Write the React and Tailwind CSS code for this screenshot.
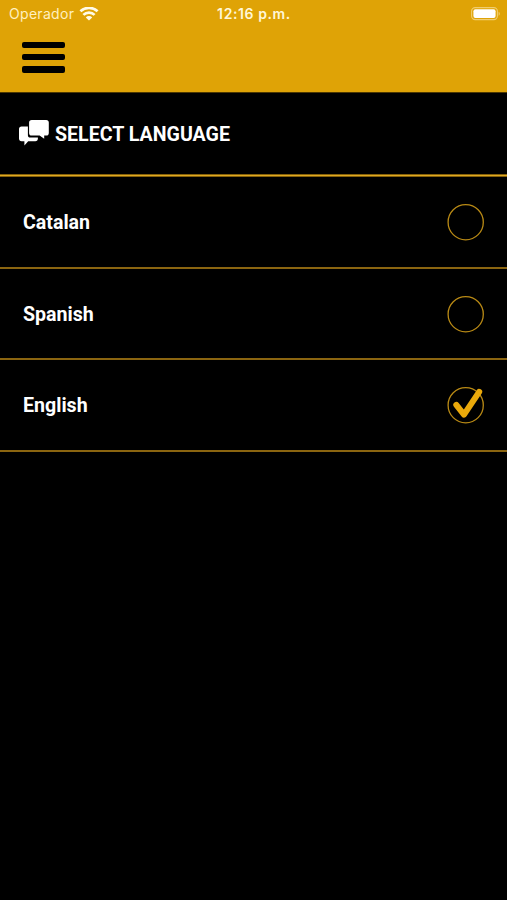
import React from 'react';

const languages = [
  { id: 'ca', name: 'Catalan' },
  { id: 'es', name: 'Spanish' },
  { id: 'en', name: 'English' },
];

function WifiIcon() {
  return (
    <svg className="w-[20px] h-[14px]" viewBox="0 0 20 14" fill="none" stroke="#fffbe8" strokeWidth="2.7">
      <path d="M1.4 4.3a12.6 12.6 0 0 1 17.2 0" />
      <path d="M4.4 7.9a8 8 0 0 1 11.2 0" />
      <path d="M10 13.4 6.8 10.4a4.4 4.4 0 0 1 6.4 0z" fill="#fffbe8" stroke="none" />
    </svg>
  );
}

function BatteryIcon() {
  return (
    <svg className="w-[30px] h-[14px]" viewBox="0 0 30 14">
      <rect x="0.6" y="0.6" width="25.8" height="12" rx="3.6" fill="none" stroke="#f0cd70" strokeWidth="1.1" />
      <rect x="2.4" y="2.2" width="22.2" height="8.8" rx="2" fill="#ffffff" />
      <path d="M27.6 4.8c1.6.6 1.6 3.4 0 4z" fill="#f0cd70" />
    </svg>
  );
}

function ChatIcon() {
  return (
    <svg className="w-[30px] h-[27px]" viewBox="0 0 30 27" fill="#ffffff">
      <path d="M2.6 6.6h6.3v8.6c0 1.5.8 2.3 2.3 2.3h7.7v1.1c0 1.7-.9 2.6-2.6 2.6H9.2l-3.8 4.2v-4.2H2.6C.9 21.2 0 20.3 0 18.6V9.2c0-1.7.9-2.6 2.6-2.6z" />
      <path d="M12.7 0h14.5c1.7 0 2.6.9 2.6 2.6v10.3c0 1.7-.9 2.6-2.6 2.6h-2v3.2l-4.6-3.2h-7.9c-1.7 0-2.6-.9-2.6-2.6V2.6C10.1.9 11 0 12.7 0z" />
    </svg>
  );
}

function Radio({ checked }) {
  return (
    <svg className="w-[38px] h-[38px] overflow-visible" viewBox="0 0 38 38" fill="none">
      <circle cx="18.7" cy="19.2" r="17.6" stroke="#b98a15" strokeWidth="1.3" />
      {checked && (
        <path
          d="M9.3 18.8 17 28.6 32.2 5.8"
          stroke="#eaa90b"
          strokeWidth="6"
          strokeLinecap="round"
          strokeLinejoin="round"
        />
      )}
    </svg>
  );
}

function StatusBar() {
  return (
    <div className="grid grid-cols-3 items-center h-7 pl-[9px] pr-[6px] text-[#fff7d8] font-['Inter','Liberation_Sans',sans-serif]">
      <div className="flex items-center gap-[5px]">
        <span className="text-[14px] leading-5 tracking-[0.3px] text-[#fff0c0]">Operador</span>
        <WifiIcon />
      </div>
      <span className="text-center text-[14px] leading-5 font-semibold tracking-[0.6px] whitespace-nowrap pr-[2px]">12:16 p.m.</span>
      <div className="flex justify-end">
        <BatteryIcon />
      </div>
    </div>
  );
}

export default function App() {
  const selected = 'en';

  return (
    <div className="h-[900px] bg-black text-white overflow-hidden font-['Roboto','Liberation_Sans',sans-serif]">
      <header className="h-[92px] bg-[#dfa306] box-content border-b border-[#4d3802]">
        <StatusBar />
        {/* Menu button */}
        <button className="flex flex-col gap-[6px] mt-[13.5px] ml-[22px] w-[43px]" aria-label="Menu">
          <span className="h-[6.4px] w-full rounded-[2px] bg-black" />
          <span className="h-[6.4px] w-full rounded-[2px] bg-black" />
          <span className="h-[6.4px] w-full rounded-[2px] bg-black" />
        </button>
      </header>

      <div className="flex items-center gap-[6px] h-[81px] pl-[19px]">
        <ChatIcon />
        <h1 className="pt-[2px] text-[19.6px] leading-6 font-bold">SELECT LANGUAGE</h1>
      </div>
      <div className="h-[3px] bg-[#e0a820] border-y border-[#85610c]" />

      <ul>
        {languages.map((lang) => (
          <li
            key={lang.id}
            className="flex items-center justify-between h-[91.6px] pt-[1px] pl-[23px] pr-[22px] border-b-2 border-[#8b6510]"
          >
            <span className="pt-[1.6px] text-[19.6px] leading-6 font-bold">{lang.name}</span>
            <Radio checked={lang.id === selected} />
          </li>
        ))}
      </ul>
    </div>
  );
}
